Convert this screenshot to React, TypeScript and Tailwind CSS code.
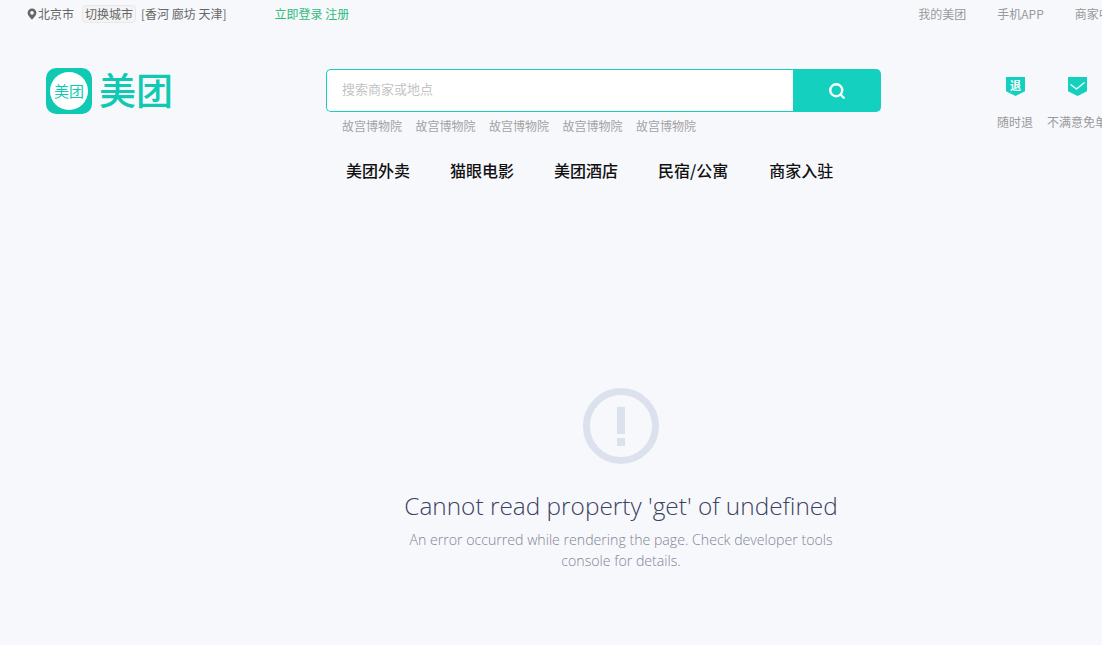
import React from "react";
import { Search } from "lucide-react";

const cjk = "font-['Noto_Sans_CJK_SC','Noto_Sans',sans-serif]";

const hotWords = ["故宫博物院", "故宫博物院", "故宫博物院", "故宫博物院", "故宫博物院"];
const navItems = ["美团外卖", "猫眼电影", "美团酒店", "民宿/公寓", "商家入驻"];

const Badge = ({ children }: { children: React.ReactNode }) => (
  <svg width="19" height="19" viewBox="0 0 19 19" className="block">
    <path d="M0 0h19v14.2L9.5 19 0 14.2z" fill="#13d1be" />
    {children}
  </svg>
);

const App = () => {
  return (
    <div className={`w-[1102px] h-[645px] overflow-hidden bg-[#f7f8fc] ${cjk}`}>
      {/* Top bar */}
      <div className="h-[28px] pl-[27px] flex items-center text-xs leading-none text-[#666] whitespace-nowrap">
        <svg width="10" height="12" viewBox="0 0 10 12" className="mr-px shrink-0">
          <path
            fillRule="evenodd"
            d="M5 0.5a4.4 4.4 0 0 1 4.4 4.4C9.4 7.6 5 11.5 5 11.5S0.6 7.6 0.6 4.9A4.4 4.4 0 0 1 5 0.5zm0 2.6a1.8 1.8 0 1 0 0 3.6 1.8 1.8 0 0 0 0-3.6z"
            fill="#666"
          />
        </svg>
        <span>北京市</span>
        <span className="ml-[8px] px-[2px] py-[2px] bg-[#f4f4f4] border border-[#e8e8e8] rounded-sm">切换城市</span>
        <span className="ml-[5px]">[香河 廊坊 天津]</span>
        <span className="ml-[48px] text-[#31bb7d]">立即登录 注册</span>
        <div className="ml-[569px] flex gap-[31px] text-[#999] shrink-0">
          <span>我的美团</span>
          <span>手机APP</span>
          <span>商家中心</span>
        </div>
      </div>

      {/* Header */}
      <div className="mt-[40px] flex items-start whitespace-nowrap">
        <div className="ml-[46px] flex items-center w-[280px] shrink-0">
          <div className="w-[46px] h-[46px] rounded-[10px] bg-[#0fc9b2] flex items-center justify-center">
            <div className="w-[38px] h-[38px] rounded-full bg-white flex items-center justify-center pb-px text-[15px] leading-none text-[#0fc9b2]">
              美团
            </div>
          </div>
          <span className="ml-[7px] pb-[3px] text-[37px] leading-none font-medium text-[#0fc9b2]">美团</span>
        </div>

        <div className="w-[555px] shrink-0 mt-px">
          <div className="h-[43px] flex">
            <div className="flex-1 h-full bg-white border border-[#13d1be] border-r-0 rounded-l-[5px] pl-[15px] pb-[3px] flex items-center text-[13px] text-[#c4c4c4]">
              搜索商家或地点
            </div>
            <div className="w-[88px] h-full bg-[#13d1be] rounded-r-[5px] flex items-center justify-center">
              <Search size={18} strokeWidth={3.2} className="text-white" />
            </div>
          </div>
          <div className="mt-[6px] pl-[16px] flex gap-[13.5px] text-xs leading-[16px] text-[#a3a3a3]">
            {hotWords.map((word, index) => (
              <span key={index}>{word}</span>
            ))}
          </div>
          <div className="mt-[24px] pl-[20px] flex gap-[40px] text-base leading-[24px] font-medium text-[#111]">
            {navItems.map((item) => (
              <span key={item} className="last:ml-px">
                {item}
              </span>
            ))}
          </div>
        </div>

        <div className="ml-[116px] mt-[9px] flex text-xs leading-none text-[#999] shrink-0">
          <div className="w-[36px] flex flex-col items-center">
            <Badge>
              <text x="9.5" y="12.5" fontSize="11" fontWeight="700" fill="#fff" textAnchor="middle">
                退
              </text>
            </Badge>
            <span className="mt-[20px]">随时退</span>
          </div>
          <div className="ml-[14px] w-[60px] flex flex-col items-center">
            <Badge>
              <path d="M2.5 7.5l6 4.5 8-6.5" fill="none" stroke="#fff" strokeWidth="1.3" />
            </Badge>
            <span className="mt-[20px]">不满意免单</span>
          </div>
        </div>
      </div>

      {/* Error state */}
      <div className="mt-[206px] flex flex-col items-center pl-[140px] font-['Open_Sans',sans-serif] font-light">
        <div className="w-[76px] h-[76px] rounded-full border-[7px] border-[#dce1ee] flex flex-col items-center justify-center">
          <div className="w-[8px] h-[27px] bg-[#dce1ee]" />
          <div className="w-[8px] h-[8px] mt-[4px] bg-[#dce1ee]" />
        </div>
        <div className="mt-[24px] text-[24.4px] leading-[36px] text-[#3c4260]">Cannot read property 'get' of undefined</div>
        <div className="mt-[5px] w-[440px] text-center text-[14.15px] leading-[21px] text-[#7f8497]">
          An error occurred while rendering the page. Check developer tools console for details.
        </div>
      </div>
    </div>
  );
};

export default App;
